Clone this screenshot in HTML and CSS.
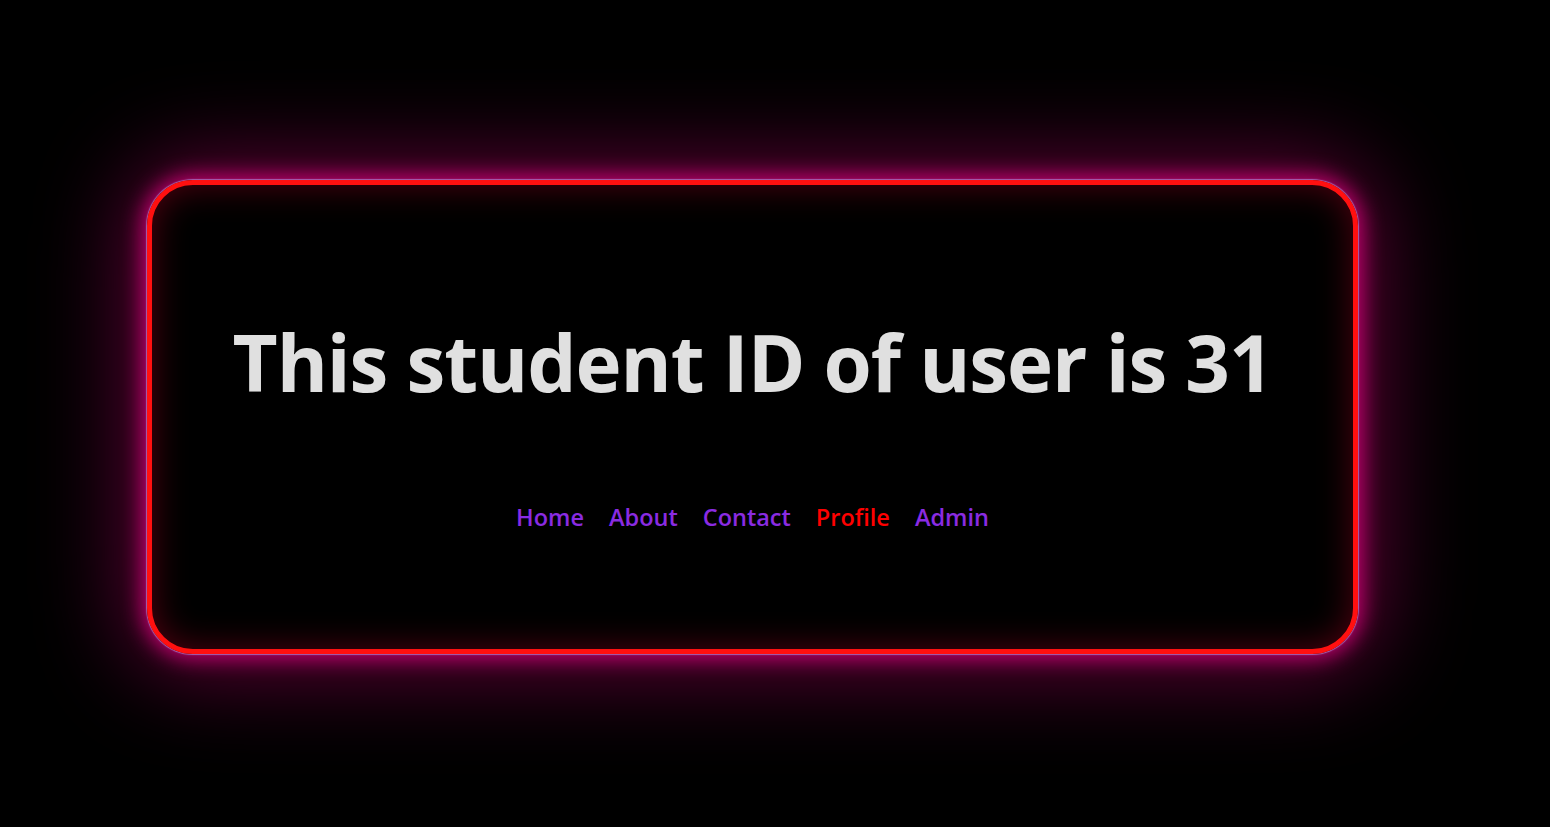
FILE: index.html
```html
<!DOCTYPE html>
<html lang="en">
<head>
<meta charset="utf-8">
<title>Student</title>
<link rel="stylesheet" href="styles.css">
</head>
<body>
<main class="stage">
  <section class="card">
    <h1 class="title">This student ID of user is 31</h1>
    <nav class="nav">
      <a class="nav-link" href="#">Home</a>
      <a class="nav-link" href="#">About</a>
      <a class="nav-link" href="#">Contact</a>
      <a class="nav-link active" href="#">Profile</a>
      <a class="nav-link" href="#">Admin</a>
    </nav>
  </section>
</main>
</body>
</html>
```
FILE: styles.css
```css
html, body {
  margin: 0;
  padding: 0;
  background: #000;
  height: 100%;
}
body {
  font-family: "Open Sans", "Noto Sans", "Liberation Sans", sans-serif;
  overflow: hidden;
}
.stage {
  display: flex;
  padding: 180px 0 0 147px;
}
.card {
  box-sizing: border-box;
  width: 1211px;
  height: 474px;
  border: 5px solid #ff1010;
  border-radius: 46px;
  display: flex;
  flex-direction: column;
  align-items: center;
  padding-top: 138px;
  box-shadow:
    0 0 1px 1px rgba(170, 140, 220, 0.7),
    0 0 20px 5px rgba(210, 0, 120, 0.85),
    0 0 90px 20px rgba(190, 0, 110, 0.5),
    inset 0 0 35px rgba(150, 0, 30, 0.55);
}
.title {
  margin: 0;
  color: #e0e0e0;
  font-size: 78px;
  font-weight: 700;
  line-height: 1;
  letter-spacing: -1.05px;
}
.nav {
  display: flex;
  gap: 25px;
  margin-top: 100px;
}
.nav-link {
  color: #8a2be2;
  text-decoration: none;
  font-size: 23.5px;
  font-weight: 600;
}
.nav-link.active {
  color: #ff0000;
}
```
